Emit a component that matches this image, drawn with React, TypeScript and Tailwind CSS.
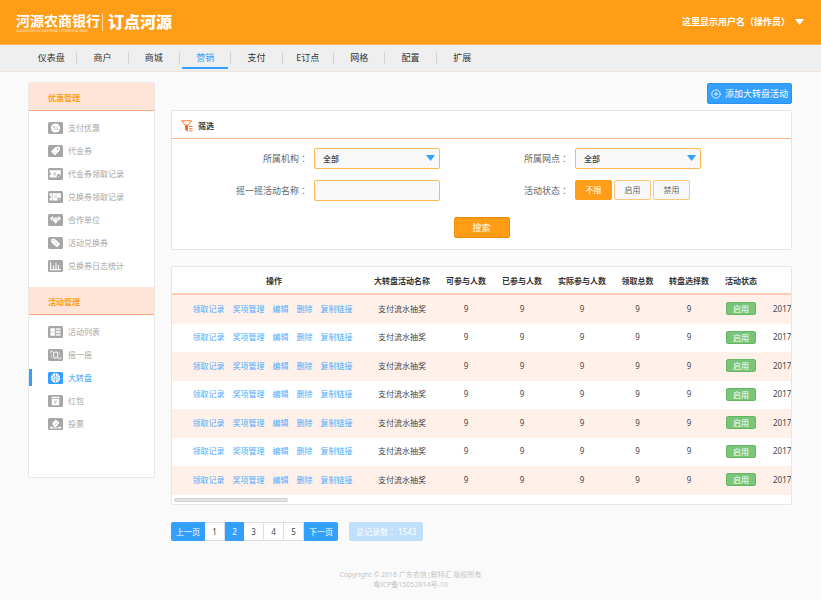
import type { ReactNode } from "react";
import { FiPlusCircle } from "react-icons/fi";

const NAV = ["仪表盘", "商户", "商城", "营销", "支付", "E订点", "网格", "配置", "扩展"];

const ACTIONS = ["领取记录", "奖项管理", "编辑", "删除", "复制链接"];

const COLUMNS = [
  { title: "操作", width: "w-[194px] pl-[10px]" },
  { title: "大转盘活动名称", width: "w-[72px]" },
  { title: "可参与人数", width: "w-[56px]" },
  { title: "已参与人数", width: "w-[56px]" },
  { title: "实际参与人数", width: "w-[64px]" },
  { title: "领取总数", width: "w-[47px]" },
  { title: "转盘选择数", width: "w-[56px]" },
  { title: "活动状态", width: "w-[48px]" },
  { title: "", width: "" },
];

const ROWS = Array.from({ length: 7 }, (_, id) => ({
  id,
  name: "支付流水抽奖",
  counts: [9, 9, 9, 9, 9],
  status: "启用",
  date: "2017",
}));

/* White glyphs, drawn over the 15x12 badge */
const GLYPHS: Record<string, ReactNode> = {
  percent: (
    <>
      <circle cx="7.5" cy="6" r="4.6" fill="#fff" />
      <path d="M9.3 4 5.8 8" stroke="currentColor" strokeWidth="0.6" />
      <circle cx="5.9" cy="4.9" r="0.8" fill="currentColor" />
      <circle cx="9.2" cy="7.2" r="0.8" fill="currentColor" />
    </>
  ),
  tag: (
    <>
      <path d="M3.4 6.6 7.4 2.5 11.4 2 11.2 5.6 7 10Z" fill="#fff" stroke="#fff" strokeLinejoin="round" />
      <circle cx="9.7" cy="3.9" r="0.8" fill="currentColor" />
      <path d="M5.6 6.4 7.4 8" stroke="currentColor" strokeWidth="0.5" />
    </>
  ),
  voucher: (
    <>
      <path d="M1.6 2.2h11.2v7.4H1.6V7.2a1.3 1.3 0 0 0 0-2.6Z" fill="#fff" />
      <path d="m5.4 4 1.3 1.7L8 4M6.7 5.7V8M5.4 6.2H8" stroke="currentColor" strokeWidth="0.6" fill="none" />
      <circle cx="10.9" cy="8.2" r="2.2" fill="currentColor" />
      <path d="m9.9 8.2.8.8 1.4-1.6" stroke="#fff" strokeWidth="0.5" fill="none" />
    </>
  ),
  exchange: (
    <>
      <path d="M1.6 2.2h11.2v7.4H1.6V7.2a1.3 1.3 0 0 0 0-2.6Z" fill="#fff" />
      <path d="M4.3 2.4v7" stroke="currentColor" strokeWidth="0.6" />
      <path d="M9 4.2 6.8 7" stroke="currentColor" strokeWidth="0.5" />
      <circle cx="6.9" cy="4.8" r="0.5" fill="currentColor" />
      <circle cx="8.9" cy="6.5" r="0.5" fill="currentColor" />
      <circle cx="11.2" cy="8.4" r="1.9" fill="currentColor" />
      <path d="m10.3 8.4.7.7 1.2-1.4" stroke="#fff" strokeWidth="0.5" fill="none" />
    </>
  ),
  handshake: (
    <>
      <path d="M2 4.4 4.2 2.2 5.4 3 4 6.8Z" fill="#fff" />
      <path d="M13 4.4 10.8 2.2 9.6 3 11 6.8Z" fill="#fff" />
      <path d="m4.6 6.2 1.4-2.8h3l1.6 3-3 3.4Z" fill="#fff" />
      <path d="M6 5.4 7.6 4.8l2.4 2.2M5.8 7.6l1.4 1.2" stroke="currentColor" strokeWidth="0.5" fill="none" />
    </>
  ),
  coupon: (
    <>
      <path d="M3.6 2.4 6.8 2.2 11.6 7 9 10 3.8 5.4Z" fill="#fff" stroke="#fff" strokeLinejoin="round" />
      <path d="m7 5 2.4 2.4M9.2 5.4 7.2 7" stroke="currentColor" strokeWidth="0.4" />
      <circle cx="5" cy="3.6" r="0.6" fill="currentColor" />
    </>
  ),
  chart: (
    <path d="M2.6 2v7.6h10.2M5.5 9V5.5M8 9V3M10.6 9V5.2" stroke="#fff" strokeWidth="1.1" fill="none" />
  ),
  list: (
    <>
      <path d="M2.4 2.2h4.4v7.6H2.4z" fill="#fff" />
      <path d="M7.6 2.2h5v2.1h-5zM7.6 5h5v2.1h-5zM7.6 7.8h5v2h-5z" fill="#fff" fillOpacity="0.8" />
      <path d="M2.4 6h4.4" stroke="currentColor" strokeWidth="0.5" />
    </>
  ),
  shake: (
    <>
      <path d="m5.4 3.4 4-.4.6 5.6-4 .4Z" fill="none" stroke="#fff" strokeWidth="1" />
      <path d="M2.8 4.4V2.2H5M12.4 7.6v2.2h-2.2" stroke="#fff" strokeWidth="0.8" fill="none" />
      <path d="m3.2 6 .8 3M11 2.6l.8 3" stroke="#fff" strokeWidth="0.5" fill="none" />
    </>
  ),
  wheel: (
    <>
      <circle cx="7.5" cy="6" r="4.7" fill="#fff" />
      <path d="M7.5 1.8v8.4M3.3 6h8.4M4.6 3.1l5.8 5.8M10.4 3.1 4.6 8.9" stroke="currentColor" strokeWidth="0.8" />
      <circle cx="7.5" cy="6" r="1.3" fill="#fff" />
      <circle cx="7.5" cy="6" r="0.6" fill="currentColor" />
    </>
  ),
  packet: (
    <>
      <path d="M3.4 1.8h8.2v1.4H3.4zM3.8 3.9h7.4v6.3H3.8z" fill="#fff" />
      <path d="m6.2 5.2 1.3 1.6 1.3-1.6M7.5 6.8v2M6.3 7.4h2.4" stroke="currentColor" strokeWidth="0.6" fill="none" />
    </>
  ),
  vote: (
    <>
      <path d="M4 5.6 7.6 1.4l3.8 3.4L8 9.2H6.6Z" fill="#fff" />
      <path d="m6.2 5.4 1.2 1.2 2-2.2" stroke="currentColor" strokeWidth="0.6" fill="none" />
      <path d="M1.8 8.8h2.4l1 .9h4.6l1-.9h2.4v1.7H1.8Z" fill="#fff" />
    </>
  ),
};

const MENU = [
  {
    title: "优惠管理",
    pad: "pb-[10px]",
    items: [
      { icon: "percent", label: "支付优惠" },
      { icon: "tag", label: "代金券" },
      { icon: "voucher", label: "代金券领取记录" },
      { icon: "exchange", label: "兑换券领取记录" },
      { icon: "handshake", label: "合作单位" },
      { icon: "coupon", label: "活动兑换券" },
      { icon: "chart", label: "兑换券日志统计" },
    ],
  },
  {
    title: "活动管理",
    pad: "pb-[42px]",
    items: [
      { icon: "list", label: "活动列表" },
      { icon: "shake", label: "摇一摇" },
      { icon: "wheel", label: "大转盘", active: true },
      { icon: "packet", label: "红包" },
      { icon: "vote", label: "投票" },
    ],
  },
];

function MenuIcon({ name }: { name: string }) {
  return (
    <svg className="h-3 w-[15px] shrink-0" viewBox="0 0 15 12" fill="none">
      <rect width="15" height="12" rx="1.5" fill="currentColor" />
      {GLYPHS[name]}
    </svg>
  );
}

function Colon() {
  return <span className="font-['Noto_Sans_CJK_TC',sans-serif]">：</span>;
}

function FieldLabel({ id, children }: { id: string; children: ReactNode }) {
  return (
    <label htmlFor={id} className="text-right text-[9px] whitespace-nowrap text-[#666]">
      {children}
      <Colon />
    </label>
  );
}

function SelectBox({ id }: { id: string }) {
  return (
    <div className="relative">
      <select
        id={id}
        className="block h-[21px] w-full appearance-none rounded-xs border border-[#ffb74f] bg-[#f8f8f8] px-2 text-[8px] font-medium text-[#444]"
      >
        <option>全部</option>
      </select>
      <svg className="pointer-events-none absolute top-[7px] right-[5px] h-1.5 w-[9px]" viewBox="0 0 9 6">
        <path d="M0 0h9L4.5 6Z" fill="#33a0ff" />
      </svg>
    </div>
  );
}

function Header() {
  return (
    <header className="flex h-[45px] items-center justify-between border-b border-[#ffb95a] bg-[#ff9d17] pr-[17px] pl-4 text-white">
      {/* Logo */}
      <a href="#" className="flex items-center">
        <span className="flex flex-col">
          <span className="text-[14px] leading-[17px] font-bold">河源农商银行</span>
          <span className="text-[3px] leading-[4px] opacity-70">GUANGDONG HEYUAN RURAL COMMERCIAL BANK</span>
        </span>
        <span className="mr-[5px] ml-0.5 h-[18px] w-px bg-white/60" />
        <span className="text-[16px] leading-[18px] font-black">订点河源</span>
      </a>
      {/* User */}
      <button className="flex items-center gap-[5px] text-[9px] font-bold">
        这里显示用户名（操作员）
        <svg className="h-1.5 w-[9px]" viewBox="0 0 9 6">
          <path d="M0 0h9L4.5 6Z" fill="#fff" />
        </svg>
      </button>
    </header>
  );
}

function NavBar() {
  return (
    <nav className="border-b border-[#f0e4da] bg-[#efefef] pl-[26px]">
      <ul className="grid w-[462px] grid-cols-9">
        {NAV.map((item, i) => (
          <li key={item} className="flex h-[26px] items-center">
            <a
              href="#"
              className={
                item === "营销"
                  ? "mx-0.5 flex h-6 flex-1 items-center justify-center self-start rounded-b-[1px] border-b-2 border-[#33a0ff] pt-1 text-[9px] text-[#33a0ff]"
                  : "flex h-6 flex-1 items-center justify-center self-start pt-0.5 text-[9px] text-[#333]"
              }
            >
              {item}
            </a>
            {i < NAV.length - 1 && <span className="h-3 w-px bg-[#d2d2d2]" />}
          </li>
        ))}
      </ul>
    </nav>
  );
}

function Sidebar() {
  return (
    <aside className="w-[127px] shrink-0 self-start rounded-xs border border-[#e8e8e8] bg-white">
      {MENU.map((group) => (
        <section key={group.title}>
          <h2 className="flex h-7 items-center border-b border-[#ffab7c] bg-[#ffe4d7] pt-0.5 pl-[19px] text-[8px] font-bold text-[#ff9d17]">
            {group.title}
          </h2>
          <ul className={`pt-[5px] ${group.pad}`}>
            {group.items.map((item) => (
              <li key={item.label} className="flex h-[23px] items-center">
                <a
                  href="#"
                  className={
                    "active" in item
                      ? "flex h-[17px] flex-1 items-center gap-[5px] border-l-3 border-[#33a0ff] pl-4 text-[8px] text-[#33a0ff]"
                      : "flex h-[17px] flex-1 items-center gap-[5px] pl-[19px] text-[8px] text-[#a6a6a6]"
                  }
                >
                  <MenuIcon name={item.icon} />
                  {item.label}
                </a>
              </li>
            ))}
          </ul>
        </section>
      ))}
    </aside>
  );
}

function FilterPanel() {
  const idle =
    "h-5 w-[37px] rounded-xs border border-[#ffc57a] bg-[#f8f8f8] text-[8px] text-[#666]";
  return (
    <form className="rounded-xs border border-[#e6e6e6] bg-white" onSubmit={(e) => e.preventDefault()}>
      <h2 className="flex h-7 items-center gap-[5px] border-b border-[#ffb68c] pt-0.5 pl-[9px] text-[8px] font-bold text-[#333]">
        <svg className="h-3 w-3" viewBox="0 0 12 12" fill="none">
          <path d="M.7.8h9.8L7 5.2H4.2Z" stroke="#ff7733" />
          <path d="M4 5h3v6.6L4 9.8Z" fill="#ff6a22" />
          <path d="M8 6.5h3.5M8 8.7h3.5M8 10.9h3.5" stroke="#ff7733" />
        </svg>
        筛选
      </h2>
      <div className="grid grid-cols-[136fr_126fr_123fr_126fr_84fr] items-center gap-x-1.5 gap-y-[11px] pt-[9px]">
        <FieldLabel id="org">所属机构</FieldLabel>
        <SelectBox id="org" />
        <FieldLabel id="branch">所属网点</FieldLabel>
        <SelectBox id="branch" />
        <span />
        <FieldLabel id="name">摇一摇活动名称</FieldLabel>
        <input
          id="name"
          type="text"
          className="h-[21px] w-full rounded-xs border border-[#ffb74f] bg-[#f8f8f8] px-2 text-[8px]"
        />
        <span id="state" className="text-right text-[9px] whitespace-nowrap text-[#666]">
          活动状态
          <Colon />
        </span>
        <div role="group" aria-labelledby="state" className="flex gap-0.5 self-start">
          <button type="button" className="h-5 w-[37px] rounded-xs bg-[#ff9d17] text-[8px] text-white">
            不限
          </button>
          <button type="button" className={idle}>
            启用
          </button>
          <button type="button" className={idle}>
            禁用
          </button>
        </div>
      </div>
      <div className="mt-4 flex justify-center pb-[11px]">
        <button className="h-[21px] w-14 rounded-xs border border-[#f08c0c] bg-[#ff9d17] text-[9px] text-white">
          搜索
        </button>
      </div>
    </form>
  );
}

function ResultTable() {
  return (
    <div className="mt-4 overflow-hidden rounded-xs border border-[#e6e6e6] bg-white">
      <table className="w-full table-fixed border-separate border-spacing-0 text-center text-[8px] whitespace-nowrap text-[#444]">
        <thead>
          <tr>
            {COLUMNS.map((col) => (
              <th
                key={col.title}
                className={`h-7 border-b-2 border-[#ffcdb3] p-0 pt-0.5 font-bold text-[#333] ${col.width}`}
              >
                {col.title}
              </th>
            ))}
          </tr>
        </thead>
        <tbody>
          {ROWS.map((row) => (
            <tr key={row.id} className="odd:h-[29px] odd:bg-[#fff1ea] even:h-7">
              <td className="p-0 pb-0.5 pl-[7px]">
                <div className="flex justify-center gap-2">
                  {ACTIONS.map((action) => (
                    <a key={action} href="#" className="text-[#4dabff]">
                      {action}
                    </a>
                  ))}
                </div>
              </td>
              <td className="p-0 pb-0.5">{row.name}</td>
              {row.counts.map((count, i) => (
                <td key={i} className="p-0 pb-0.5">
                  {count}
                </td>
              ))}
              <td className="p-0 pb-0.5">
                <span className="inline-block w-[30px] rounded-xs border border-[#63b763] bg-[#7ac57a] align-middle leading-[11px] text-white">
                  {row.status}
                </span>
              </td>
              <td className="p-0 pb-0.5 pl-2 text-left">{row.date}</td>
            </tr>
          ))}
        </tbody>
      </table>
      <div className="mt-[3px] mb-0.5 ml-0.5 h-1 w-[114px] rounded-full border border-[#cfcfcf] bg-[#e6e6e6]" />
    </div>
  );
}

function Pagination() {
  return (
    <div className="mt-[17px] flex h-[19px] items-stretch gap-[11px] text-[8px]">
      <div className="flex overflow-hidden rounded-xs">
        <button className="w-[34px] bg-[#33a0ff] text-white">上一页</button>
        {[1, 2, 3, 4, 5].map((page) => (
          <button
            key={page}
            className={
              page === 2
                ? "w-[19px] bg-[#33a0ff] text-white"
                : "w-5 border-y border-r border-[#dde1e6] bg-white text-[#444]"
            }
          >
            {page}
          </button>
        ))}
        <button className="w-[34px] bg-[#33a0ff] text-white">下一页</button>
      </div>
      <span className="flex items-center rounded-xs bg-[#bfdffb] px-[7px] text-white">
        总记录数
        <Colon />
        &nbsp;1543
      </span>
    </div>
  );
}

export default function App() {
  return (
    <div className="min-h-screen bg-[#fafafa] font-['Noto_Sans','Noto_Sans_CJK_SC',sans-serif]">
      <Header />
      <NavBar />
      <div className="flex gap-4 pt-[10px] pr-[29px] pl-7">
        <Sidebar />
        <main className="min-w-0 flex-1 pt-px">
          <div className="mb-1.5 flex justify-end">
            <button className="flex h-[21px] items-center gap-1 rounded-xs border border-[#2b93ee] bg-[#33a0ff] px-[3px] text-[9px] text-white">
              <FiPlusCircle className="text-[10px]" />
              添加大转盘活动
            </button>
          </div>
          <FilterPanel />
          <ResultTable />
          <Pagination />
        </main>
      </div>
      <footer className="mt-[29px] text-center text-[7px] leading-[10px] text-[#c4c4c4]">
        <p>Copyright © 2016 广东农信|鲜特汇 版权所有</p>
        <p>粤ICP备15052814号-10</p>
      </footer>
    </div>
  );
}
